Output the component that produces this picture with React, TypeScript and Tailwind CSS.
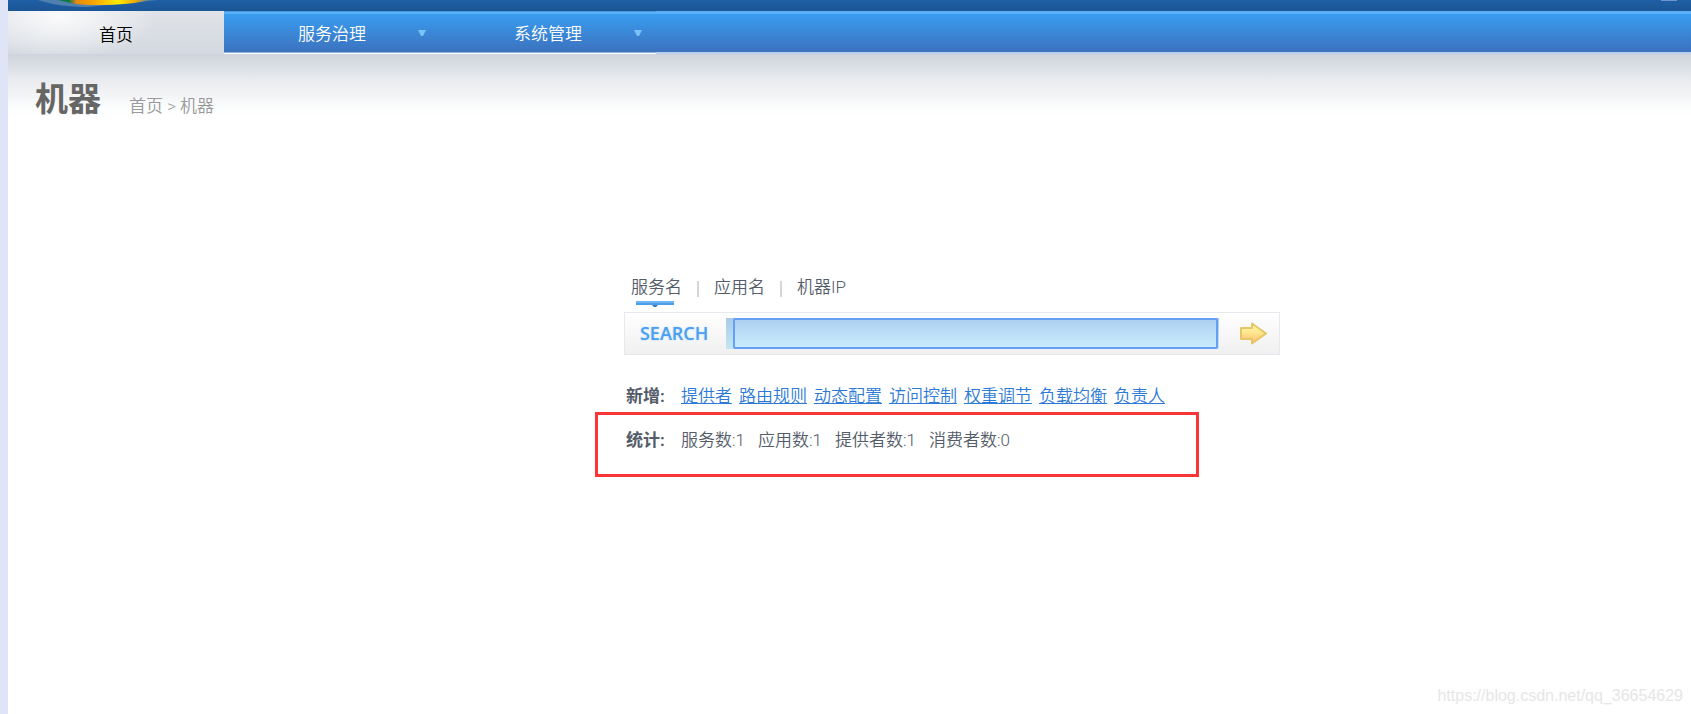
import { useState } from "react";

const menus = ["服务治理", "系统管理"];
const searchTypes = ["服务名", "应用名", "机器IP"];
const createLinks = ["提供者", "路由规则", "动态配置", "访问控制", "权重调节", "负载均衡", "负责人"];
const stats = [
  { label: "服务数", value: 1 },
  { label: "应用数", value: 1 },
  { label: "提供者数", value: 1 },
  { label: "消费者数", value: 0 },
];

const TopBanner = () => (
  <header className="flex h-[11px] justify-between overflow-hidden bg-linear-to-b from-[#1f5fa6] to-[#1b5594]">
    <svg width="130" height="11" viewBox="0 0 130 11" className="ml-[28px]" aria-hidden="true">
      <defs>
        <linearGradient id="rainbow" x1="0" x2="1">
          <stop offset="0" stopColor="#0f7a45" />
          <stop offset="0.12" stopColor="#0f7a45" />
          <stop offset="0.2" stopColor="#e8890c" />
          <stop offset="0.4" stopColor="#f7a800" />
          <stop offset="0.65" stopColor="#ffea00" />
          <stop offset="0.85" stopColor="#e8a80a" />
          <stop offset="1" stopColor="#4f80b0" />
        </linearGradient>
      </defs>
      <path d="M2 0C18 5 34 7 52 7L70 5L122 0Z" fill="#4f80b0" />
      <path d="M22 0C34 3 42 5 60 5C84 5 102 3 114 0Z" fill="url(#rainbow)" />
    </svg>
    <span className="mr-[14px] h-px w-4 bg-[#7296cb]" />
  </header>
);

const NavBar = () => (
  <nav className="flex h-[43px] bg-linear-to-b from-[#38a0f4] to-[#3b70bc] text-[17px] leading-[43px] shadow-[inset_0_3px_#5eb0f6,inset_0_-2px_#b8cee9]">
    <a
      href="#home"
      className="w-[216px] bg-[radial-gradient(ellipse_96px_44px_at_52px_6px,#fafafb,transparent),linear-gradient(#e0e3e7,#d3d9e0)] pt-[3px] text-center text-black"
    >
      首页
    </a>
    {menus.map((menu) => (
      <button
        key={menu}
        className="relative w-[216px] cursor-pointer pt-[2px] text-center text-white shadow-[inset_0_1px_#3f9bea,inset_0_-1px_#ffffff,inset_0_-2px_#8fb0dc]"
      >
        {menu}
        <svg width="8" height="6" viewBox="0 0 8 6" className="absolute top-[19px] right-[14px]" aria-hidden="true">
          <path d="M0 0H8L5 6H3Z" fill="#7cc2fa" />
        </svg>
      </button>
    ))}
  </nav>
);

const ArrowIcon = () => (
  <svg width="28" height="24" viewBox="0 0 28 24" aria-hidden="true">
    <defs>
      <linearGradient id="gold" x1="0" y1="0" x2="0" y2="1">
        <stop offset="0" stopColor="#fffbb0" />
        <stop offset="0.5" stopColor="#ffe48a" />
        <stop offset="1" stopColor="#ffb678" />
      </linearGradient>
    </defs>
    <path
      d="M2 6H13V1.5L27 11.5L13 21.5V17H2Z"
      fill="url(#gold)"
      stroke="#e6c767"
      strokeWidth="2"
      strokeLinejoin="round"
    />
  </svg>
);

const SearchPanel = () => {
  const [active, setActive] = useState(searchTypes[0]);
  const [keyword, setKeyword] = useState("");

  return (
    <section>
      <div className="flex h-9 pl-[7px] leading-[22px]">
        {searchTypes.map((type, i) => (
          <div key={type} className="flex">
            {i > 0 && <span className="mx-[15px] mt-[5px] h-4 w-[2px] bg-[#d3d5da]" />}
            <button className="relative h-[22px] cursor-pointer" onClick={() => setActive(type)}>
              {type}
              {active === type && (
                <svg width="38" height="7" viewBox="0 0 38 7" className="absolute top-[25px] left-[5px]" aria-hidden="true">
                  <path d="M0 0H38V4H0Z" fill="#4d9ee6" />
                  <path d="M0 0H38V2H0Z" fill="#6cb6f5" />
                  <path d="M16 4H22L20 6H18Z" fill="#2f7cbd" />
                </svg>
              )}
            </button>
          </div>
        ))}
      </div>
      <form
        className="flex h-[43px] w-[656px] items-center border border-[#e6eaee] bg-linear-to-b from-white to-[#f0f0f0]"
        onSubmit={(e) => e.preventDefault()}
      >
        <label
          htmlFor="keyword"
          className="w-[101px] pl-[15px] font-['Open_Sans',sans-serif] text-[18px] font-semibold text-[#4c9ff0] [text-shadow:0_0_2px_#a9d4fb]"
        >
          SEARCH
        </label>
        <div className="flex h-[31px] w-[493px] bg-linear-to-b from-[#a8cce6] to-[#c4e6f5] pl-[7px]">
          <input
            id="keyword"
            autoFocus
            value={keyword}
            onChange={(e) => setKeyword(e.target.value)}
            className="h-[31px] w-[485px] rounded-[2px] border-2 border-[#66a0f4] bg-linear-to-b from-[#abd0f0] via-[#bddff7] to-[#c9ebfb] outline-none"
          />
        </div>
        <button aria-label="搜索" className="ml-[20px] cursor-pointer">
          <ArrowIcon />
        </button>
      </form>
    </section>
  );
};

const App = () => {
  return (
    <div className="flex min-h-screen bg-white font-['Roboto','Noto_Sans_CJK_SC',sans-serif] text-[17px] font-[350] text-[#535c68]">
      <aside className="w-2 shrink-0 bg-[#dfe5f6]" />
      <div className="flex min-w-0 flex-1 flex-col">
        <TopBanner />
        <NavBar />
        <main className="flex-1 bg-[linear-gradient(#ced3dd,#dde1e6_15px,#e9ebee_25px,#f3f4f6_42px,#fcfdfd_54px,#fff_64px)]">
          <div className="flex h-[71px] items-end pl-[27px]">
            <h1 className="text-[33px] leading-[50px] font-bold text-[#666666]">机器</h1>
            <p className="ml-7 pb-[6px] leading-[26px] text-[#999999]">
              <a href="#home">首页</a> &gt; 机器
            </p>
          </div>

          <div className="mt-[151px] pl-[36.6%]">
            <SearchPanel />
            <div className="mt-[30px] flex h-[27px] gap-[7px] pl-[2px] leading-[22px] whitespace-nowrap">
              <strong className="w-[48px] font-bold">新增:</strong>
              {createLinks.map((link) => (
                <a key={link} href="#create" className="text-[#2c7ad6] underline">
                  {link}
                </a>
              ))}
            </div>
            <div className="-ml-[29px] flex h-[65px] w-[604px] gap-[13px] border-3 border-[#fb3535] pt-[14px] pl-7 leading-[22px] whitespace-nowrap">
              <strong className="w-[42px] font-bold">统计:</strong>
              {stats.map((s) => (
                <span key={s.label}>
                  {s.label}:{s.value}
                </span>
              ))}
            </div>
          </div>
        </main>
        <footer className="h-[26px] pr-2 text-right font-['Liberation_Sans',sans-serif] text-[16px] leading-4 text-[#e6e6e6]">
          https://blog.csdn.net/qq_36654629
        </footer>
      </div>
    </div>
  );
};

export default App;
